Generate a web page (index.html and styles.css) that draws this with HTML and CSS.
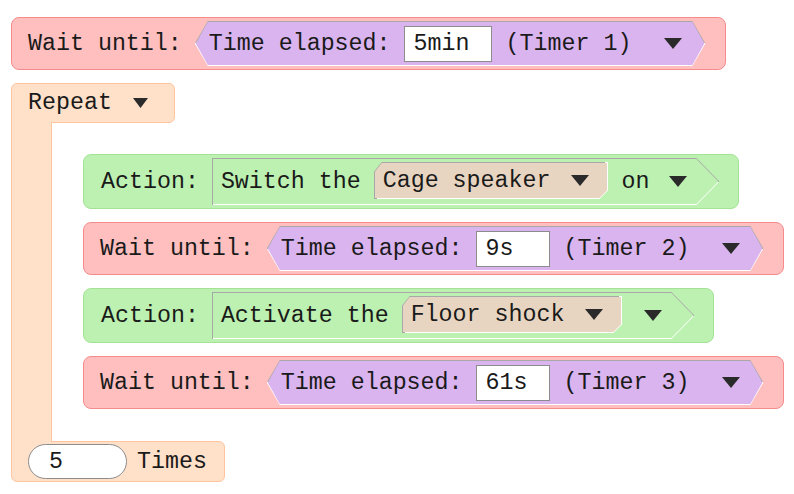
FILE: index.html
```html
<!DOCTYPE html>
<html lang="en">
<head>
    <meta charset="UTF-8">
    <meta name="viewport" content="width=device-width, initial-scale=1.0">
    <title>Program</title>
    <link rel="stylesheet" href="styles.css">
</head>
<body>
    <main class="program">
        <div class="block wait">
            <span class="label">Wait until:</span>
            <div class="cond">
                <div class="cond-in">
                    <span>Time elapsed:</span>
                    <span class="field field-long">5min</span>
                    <span class="timer">(Timer 1)</span>
                    <svg class="caret" viewBox="0 0 18 11"><polygon points="0,0 18,0 9,11"/></svg>
                </div>
            </div>
        </div>

        <div class="repeat">
            <div class="repeat-head">
                <span>Repeat</span>
                <svg class="caret caret-small" viewBox="0 0 15 10"><polygon points="0,0 15,0 7.5,10"/></svg>
            </div>
            <div class="repeat-body">
                <div class="repeat-arm"></div>
                <div class="stack">
                    <div class="block action">
                        <span class="label">Action:</span>
                        <div class="slot">
                            <div class="slot-in">
                                <span>Switch the</span>
                                <div class="chip">
                                    <div class="chip-in">
                                        <span>Cage speaker</span>
                                        <svg class="caret" viewBox="0 0 18 11"><polygon points="0,0 18,0 9,11"/></svg>
                                    </div>
                                </div>
                                <span class="option">on</span>
                                <svg class="caret caret-after" viewBox="0 0 18 11"><polygon points="0,0 18,0 9,11"/></svg>
                            </div>
                        </div>
                    </div>

                    <div class="block wait">
                        <span class="label">Wait until:</span>
                        <div class="cond">
                            <div class="cond-in">
                                <span>Time elapsed:</span>
                                <span class="field">9s</span>
                                <span class="timer">(Timer 2)</span>
                                <svg class="caret" viewBox="0 0 18 11"><polygon points="0,0 18,0 9,11"/></svg>
                            </div>
                        </div>
                    </div>

                    <div class="block action">
                        <span class="label">Action:</span>
                        <div class="slot">
                            <div class="slot-in">
                                <span>Activate the</span>
                                <div class="chip">
                                    <div class="chip-in">
                                        <span>Floor shock</span>
                                        <svg class="caret" viewBox="0 0 18 11"><polygon points="0,0 18,0 9,11"/></svg>
                                    </div>
                                </div>
                                <svg class="caret caret-empty" viewBox="0 0 18 11"><polygon points="0,0 18,0 9,11"/></svg>
                            </div>
                        </div>
                    </div>

                    <div class="block wait">
                        <span class="label">Wait until:</span>
                        <div class="cond">
                            <div class="cond-in">
                                <span>Time elapsed:</span>
                                <span class="field">61s</span>
                                <span class="timer">(Timer 3)</span>
                                <svg class="caret" viewBox="0 0 18 11"><polygon points="0,0 18,0 9,11"/></svg>
                            </div>
                        </div>
                    </div>
                </div>
            </div>
            <div class="repeat-foot">
                <span class="count">5</span>
                <span>Times</span>
            </div>
        </div>
    </main>
</body>
</html>
```

FILE: styles.css
```css
:root{
    --font-mono: 'Liberation Mono', 'Courier New', monospace;
    --ink: #1a1a1a;

    --red-fill: #ffbfbf;
    --red-line: #f58b8b;
    --purple: #dab4ef;
    --green-fill: #bdf1b1;
    --green-line: #a4e395;
    --peach-fill: #ffe0c9;
    --peach-line: #ffc59e;
    --beige: #e8d5c1;

    --edge-dark: #a8a8a8;
    --edge-light: #ffffff;
    --field-line: #8c8c8c;
}

*{
    margin: 0px;
    padding: 0px;
    box-sizing: border-box;
}

body{
    background-color: #ffffff;
    font-family: var(--font-mono);
    font-size: 23.3px;
    color: var(--ink);
    white-space: nowrap;
}

.program{
    display: flex;
    flex-direction: column;
    align-items: flex-start;
    gap: 13px;
    padding: 17px 0px 0px 11px;
}

/* blocks */

.block{
    display: flex;
    align-items: center;
    border: 1px solid;
    border-radius: 8px;
    padding: 3px 20px 3px 16px;
}

.wait{
    background-color: var(--red-fill);
    border-color: var(--red-line);
}

.action{
    background-color: var(--green-fill);
    border-color: var(--green-line);
    padding-left: 17px;
    padding-right: 19px;
}

.label{
    margin-right: 13px;
}

.caret{
    width: 18px;
    height: 11px;
    flex-shrink: 0;
    fill: #2a2a2a;
}

.caret-small{
    width: 15px;
    height: 10px;
}

/* purple condition */

.cond{
    padding: 1px;
    background: linear-gradient(var(--edge-dark) 50%, var(--edge-light) 50%);
    clip-path: polygon(13px 0, calc(100% - 13px) 0, 100% 50%, calc(100% - 13px) 100%, 13px 100%, 0 50%);
}

.cond-in{
    display: flex;
    align-items: center;
    height: 43px;
    padding: 0px 22px 0px 13px;
    background-color: var(--purple);
    clip-path: polygon(12px 0, calc(100% - 12px) 0, 100% 50%, calc(100% - 12px) 100%, 12px 100%, 0 50%);
}

.field{
    display: flex;
    align-items: center;
    width: 74px;
    height: 36px;
    margin-left: 13px;
    padding: 0px 9px;
    background-color: #ffffff;
    border: 1px solid var(--field-line);
}

.field-long{
    width: 88px;
}

.timer{
    margin-left: 14px;
    margin-right: 33px;
}

/* action slot */

.slot{
    padding: 1px;
    background:
        linear-gradient(var(--edge-dark), var(--edge-dark)) left / 1px 100% no-repeat,
        linear-gradient(var(--edge-dark) 50%, var(--edge-light) 50%);
    clip-path: polygon(0 0, calc(100% - 23px) 0, 100% 50%, calc(100% - 23px) 100%, 0 100%);
}

.slot-in{
    display: flex;
    align-items: center;
    height: 45px;
    padding: 0px 31px 0px 8px;
    background-color: var(--green-fill);
    clip-path: polygon(0 0, calc(100% - 22px) 0, 100% 50%, calc(100% - 22px) 100%, 0 100%);
}

.chip{
    margin: 0px 0px 2px 13px;
    padding: 1px;
    background: linear-gradient(to bottom right, var(--edge-dark) 50%, var(--edge-light) 50%);
    clip-path: polygon(8px 0, 100% 0, 100% calc(100% - 9px), calc(100% - 9px) 100%, 0 100%, 0 10px);
}

.chip-in{
    display: flex;
    align-items: center;
    gap: 21px;
    height: 35px;
    padding: 0px 18px 0px 8px;
    background-color: var(--beige);
    clip-path: polygon(7px 0, 100% 0, 100% calc(100% - 8px), calc(100% - 8px) 100%, 0 100%, 0 9px);
}

.option{
    margin-left: 13px;
}

.caret-after{
    margin-left: 20px;
}

.caret-empty{
    margin-left: 22px;
}

/* repeat loop */

.repeat{
    display: flex;
    flex-direction: column;
    align-items: flex-start;
}

.repeat-head,
.repeat-foot{
    display: flex;
    align-items: center;
    background-color: var(--peach-fill);
    border: 1px solid var(--peach-line);
}

.repeat-head{
    gap: 21px;
    height: 40px;
    padding: 0px 26px 0px 16px;
    border-radius: 6px 6px 6px 0px;
}

.repeat-body{
    display: flex;
    align-self: stretch;
    margin: -1px 0px;
}

.repeat-arm{
    position: relative;
    z-index: 1;
    width: 41px;
    background-color: var(--peach-fill);
    border: solid var(--peach-line);
    border-width: 0px 1px;
}

.stack{
    display: flex;
    flex-direction: column;
    align-items: flex-start;
    gap: 13px;
    padding: 32px 0px 33px 31px;
}

.repeat-foot{
    gap: 10px;
    height: 41px;
    padding: 0px 17px 0px 16px;
    border-radius: 0px 6px 6px 6px;
}

.count{
    display: flex;
    align-items: center;
    width: 99px;
    height: 35px;
    padding-left: 20px;
    background-color: #ffffff;
    border: 1px solid var(--field-line);
    border-radius: 18px;
}
```
